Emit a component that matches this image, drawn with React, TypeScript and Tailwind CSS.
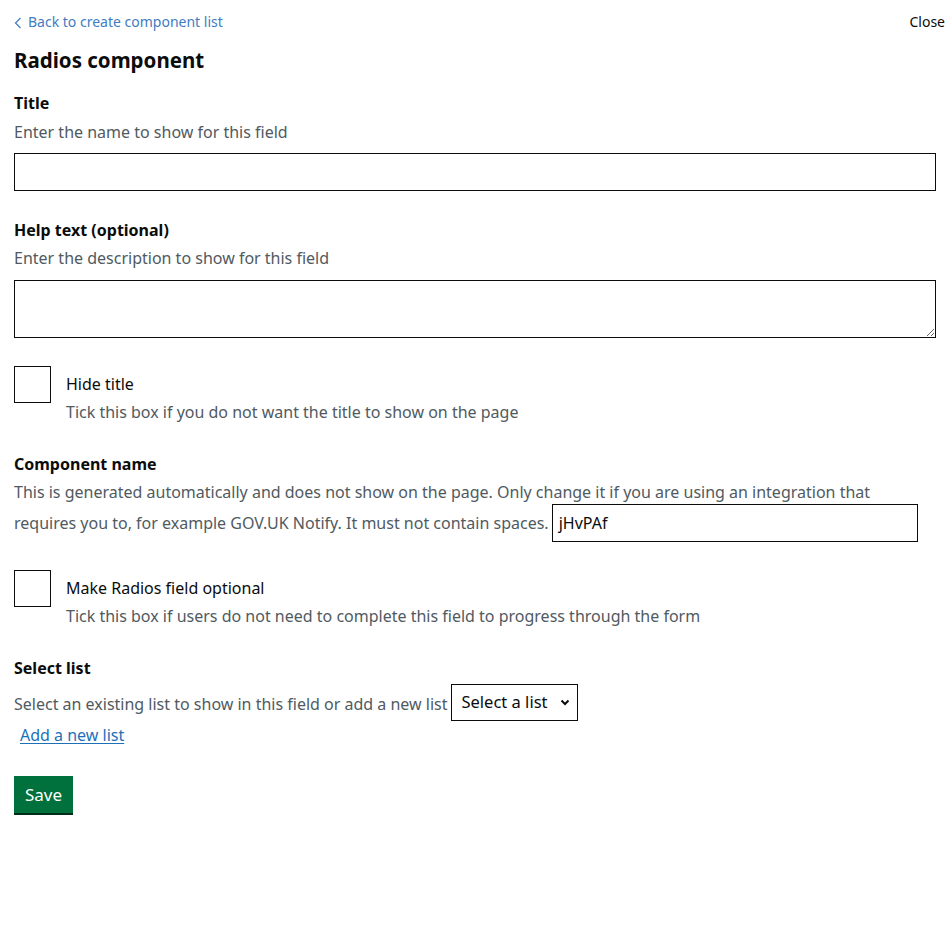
import React from "react";

export default function App() {
  return (
    <div className="min-h-[925px] bg-white text-[#0b0c0c]" style={{ fontFamily: "'Noto Sans', sans-serif" }}>
      <div className="px-[14px] pt-[12px]">
        <div className="flex items-start justify-between">
          <a className="flex items-center gap-[6px] text-[14px] leading-[20px] text-[#3f7cc2]" href="#">
            <svg width="8" height="12" viewBox="0 0 8 12" className="mt-[1px]">
              <path d="M6.5 1 L1.5 6 L6.5 11" fill="none" stroke="#3f7cc2" strokeWidth="1.2" />
            </svg>
            Back to create component list
          </a>
          <span className="mr-[-11px] text-[14px] leading-[20px] text-[#0b0c0c]">Close</span>
        </div>
        <h1 className="mt-[14px] text-[20.5px] font-bold leading-[28px]">Radios component</h1>

        <div className="mt-[18px] text-[16px] font-bold leading-[22px]">Title</div>
        <div className="mt-[7px] text-[16px] leading-[22px] text-[#505a5f]">Enter the name to show for this field</div>
        <div className="mt-[10px] h-[38px] w-[922px] border border-[#0b0c0c]"></div>

        <div className="mt-[28px] text-[16px] font-bold leading-[22px]">Help text (optional)</div>
        <div className="mt-[6px] text-[16px] leading-[22px] text-[#505a5f]">Enter the description to show for this field</div>
        <textarea className="mt-[11px] block h-[58px] w-[922px] border border-[#0b0c0c] outline-none" />

        <div className="mt-[28px] flex">
          <div className="h-[37px] w-[37px] shrink-0 border border-[#0b0c0c]"></div>
          <div className="ml-[15px] pt-[7px]">
            <div className="text-[16px] leading-[22px]">Hide title</div>
            <div className="mt-[6px] text-[16px] leading-[22px] text-[#505a5f]">Tick this box if you do not want the title to show on the page</div>
          </div>
        </div>

        <div className="mt-[30px] text-[16px] font-bold leading-[22px]">Component name</div>
        <div className="mt-[2px] text-[16px] leading-[31px] text-[#505a5f]">
          This is generated automatically and does not show on the page. Only change it if you are using an integration that
        </div>
        <div className="mt-[-4px] flex items-center text-[16px] text-[#505a5f]">
          <span className="pr-[3px]">requires you to, for example GOV.UK Notify. It must not contain spaces.</span>
          <div className="h-[38px] w-[366px] border border-[#0b0c0c] px-[6px] text-[16px] leading-[36px] text-[#0b0c0c]">jHvPAf</div>
        </div>

        <div className="mt-[28px] flex">
          <div className="h-[37px] w-[37px] shrink-0 border border-[#0b0c0c]"></div>
          <div className="ml-[15px] pt-[7px]">
            <div className="text-[16px] leading-[22px]">Make Radios field optional</div>
            <div className="mt-[6px] text-[16px] leading-[22px] text-[#505a5f]">Tick this box if users do not need to complete this field to progress through the form</div>
          </div>
        </div>

        <div className="mt-[30px] text-[16px] font-bold leading-[22px]">Select list</div>
        <div className="mt-[5px] flex items-center text-[16px] text-[#505a5f]">
          <span className="pr-[4px] pt-[3px]">Select an existing list to show in this field or add a new list</span>
          <div className="flex h-[37px] items-center border border-[#0b0c0c] pl-[9px] pr-[7px] text-[16.5px] text-[#0b0c0c]">
            <span>Select a list</span>
            <svg width="10" height="7" viewBox="0 0 10 7" className="ml-[12px]">
              <path d="M1.5 1.5 L5 5 L8.5 1.5" fill="none" stroke="#0b0c0c" strokeWidth="2" />
            </svg>
          </div>
        </div>
        <a href="#" className="ml-[6px] mt-[3px] inline-block text-[16px] leading-[22px] text-[#1d70b8] underline underline-offset-[2px]">Add a new list</a>

        <div className="mt-[29px]">
          <button className="h-[37px] bg-[#00703c] px-[11px] text-[17px] text-white shadow-[0_2px_0_#002d18]">Save</button>
        </div>
      </div>
    </div>
  );
}
